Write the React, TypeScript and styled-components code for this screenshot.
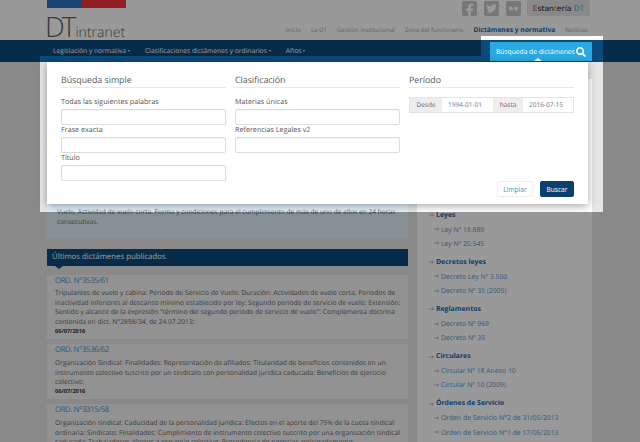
import React from 'react';
import styled, { createGlobalStyle } from 'styled-components';
import { FaFacebookSquare, FaTwitterSquare, FaFlickr, FaSearch } from 'react-icons/fa';

const Global = createGlobalStyle`
  html, body { margin: 0; padding: 0; }
  body {
    background: #e5e5e5;
    font-family: "Open Sans", sans-serif;
    color: #555;
    text-rendering: geometricPrecision;
  }
  * { box-sizing: border-box; }
`;

const Page = styled.div`
  position: relative;
  width: 640px;
  height: 442px;
  overflow: hidden;
`;

const Dim = styled.div`
  position: absolute;
  inset: 0;
  background: rgba(0, 0, 0, 0.4);
  clip-path: path(evenodd, 'M0 0H640V442H0Z M40 56H481V36H603V212H40Z');
`;

const Header = styled.header`
  height: 40px;
  background: #fff;
`;

const Wrap = styled.div`
  width: 545px;
  margin-left: 47px;
  display: flex;
  justify-content: space-between;
`;

const Brand = styled.div`
  width: 80px;
`;

const Flag = styled.div`
  display: flex;
  height: 8px;
  width: 79px;
  margin-bottom: 6px;
`;

const FlagPart = styled.div<{ $color: string; $width: number }>`
  background: ${p => p.$color};
  width: ${p => p.$width}px;
`;

const Logo = styled.div`
  display: flex;
  align-items: baseline;
  color: #5e5e5e;
  font-weight: 300;
  height: 26px;
  line-height: 26px;
`;

const LogoBig = styled.span`
  font-size: 28px;
  letter-spacing: -3px;
  margin-left: -2px;
`;

const LogoSmall = styled.span`
  font-size: 14px;
  margin-left: 2px;
`;

const HeaderRight = styled.div`
  display: flex;
  flex-direction: column;
  align-items: flex-end;
`;

const Socials = styled.div`
  display: flex;
  align-items: center;
  height: 16px;
  margin-right: 2px;
  color: #c6c6c6;
  font-size: 17px;
  gap: 5px;
`;

const Estanteria = styled.div`
  width: 63px;
  height: 16px;
  background: #e4e4e4;
  border-radius: 2px;
  font-family: "DejaVu Sans", sans-serif;
  font-size: 7.6px;
  line-height: 17px;
  text-align: center;
  color: #222;
  white-space: nowrap;
`;

const Tint = styled.span<{ $color: string }>`
  color: ${p => p.$color};
`;

const TopMenu = styled.nav`
  display: flex;
  gap: 10px;
  margin: 8px 4px 0 0;
  line-height: 12px;
`;

const TopLink = styled.span<{ $active?: boolean }>`
  color: ${p => (p.$active ? '#1a66ad' : '#a8a8a8')};
  font-weight: ${p => (p.$active ? 700 : 400)};
  font-size: ${p => (p.$active ? '6.7px' : '6.1px')};
  white-space: nowrap;
`;

const NavBar = styled.nav`
  height: 22px;
  background: #0b4a7a;
`;

const NavList = styled.div`
  display: flex;
  align-items: center;
  gap: 15px;
  padding-left: 6px;
  height: 20px;
  color: #fff;
  font-size: 6.7px;
`;

const Caret = styled.span`
  display: inline-block;
  margin-left: 2px;
  border-top: 2px solid currentColor;
  border-left: 1.5px solid transparent;
  border-right: 1.5px solid transparent;
  vertical-align: middle;
`;

const SearchButton = styled.div`
  position: relative;
  width: 102px;
  height: 19px;
  margin-top: 2px;
  background: #29abe2;
  color: #fff;
  font-size: 6.7px;
  display: flex;
  align-items: center;
  justify-content: space-between;
  padding: 0 6px;
  white-space: nowrap;
  svg { font-size: 10px; }
  &::after {
    content: '';
    position: absolute;
    left: 44px;
    bottom: 0;
    border-bottom: 3px solid #fff;
    border-left: 4px solid transparent;
    border-right: 4px solid transparent;
  }
`;

const Main = styled.main`
  width: 545px;
  margin-left: 47px;
  padding-top: 17px;
  display: flex;
  gap: 9px;
`;

const Left = styled.section`
  width: 361px;
`;

const InfoBox = styled.div`
  height: 159px;
  background: #e0f0f9;
  padding: 128px 10px 0;
  font-size: 6.6px;
  line-height: 9.5px;
  color: #666;
`;

const ListHead = styled.div`
  position: relative;
  height: 17px;
  margin: 11px 0 8.5px;
  background: #0b4a7a;
  color: #fff;
  font-size: 7.8px;
  line-height: 16px;
  padding-left: 5px;
  &::after {
    content: '';
    position: absolute;
    left: 8px;
    top: 17px;
    border-top: 3px solid #0b4a7a;
    border-left: 4px solid transparent;
    border-right: 4px solid transparent;
  }
`;

const Card = styled.article`
  background: #f4f4f4;
  margin-top: 5px;
  padding: 0 4px 4.5px 8px;
`;

const CardTitle = styled.div`
  color: #4f93d0;
  font-size: 7.8px;
  letter-spacing: -0.4px;
  line-height: 13px;
  margin-bottom: 0.7px;
`;

const CardText = styled.div`
  font-size: 6.7px;
  line-height: 9.6px;
  color: #666;
`;

const CardDate = styled.div`
  margin-top: 0.2px;
  font-size: 5.6px;
  line-height: 8px;
  font-weight: 700;
  color: #333;
`;

const Sidebar = styled.aside`
  width: 175px;
  height: 400px;
  background: #fff;
  padding: 129px 0 0 12px;
`;

const SideGroup = styled.div`
  margin-bottom: 4.6px;
`;

const SideRow = styled.div<{ $head?: boolean }>`
  display: flex;
  align-items: center;
  gap: 2px;
  height: 14.2px;
  margin-left: ${p => (p.$head ? 0 : 5)}px;
  color: ${p => (p.$head ? '#1a66ad' : '#5590cc')};
  font-weight: ${p => (p.$head ? 700 : 400)};
  font-size: ${p => (p.$head ? '6.9px' : '6.8px')};
  white-space: nowrap;
`;

const Arrow = () => (
  <svg width="5" height="4" viewBox="0 0 5 4" fill="none" stroke="#aaa" strokeWidth="0.8">
    <path d="M0 2H4.5M3 .7L4.5 2L3 3.3" />
  </svg>
);

const Modal = styled.div`
  position: absolute;
  left: 47px;
  top: 62px;
  width: 541px;
  height: 142px;
  background: #fff;
  box-shadow: 0 2px 8px rgba(0, 0, 0, 0.35);
  padding: 12px 14px 7px;
  display: grid;
  grid-template-columns: repeat(3, 165px);
  gap: 9px;
`;

const Col = styled.div`
  display: flex;
  flex-direction: column;
`;

const ColTitle = styled.h4`
  margin: 0 0 9px;
  height: 14px;
  font-size: 8.8px;
  font-weight: 400;
  line-height: 13px;
  color: #555;
  border-bottom: 1px solid #e8e8e8;
`;

const Label = styled.label`
  display: block;
  font-size: 7.2px;
  line-height: 10px;
  padding-bottom: 2px;
  color: #555;
`;

const TextBox = styled.div`
  height: 16px;
  flex: none;
  border: 1px solid #ddd;
  border-radius: 2px;
  background: #fff;
  box-shadow: inset 0 1px 1px rgba(0, 0, 0, 0.05);
`;

const DateGroup = styled.div`
  display: grid;
  grid-template-columns: 32px 51px 30px 51px;
  height: 16px;
  border: 1px solid #e4e4e4;
  font-size: 6.5px;
  line-height: 14px;
`;

const DateAddon = styled.span`
  background: #eee;
  color: #666;
  text-align: center;
`;

const DateValue = styled.span`
  color: #777;
  padding-left: 6px;
`;

const Actions = styled.div`
  margin-top: auto;
  display: flex;
  justify-content: flex-end;
  gap: 7px;
`;

const Btn = styled.button<{ $primary?: boolean }>`
  width: ${p => (p.$primary ? 34 : 36)}px;
  height: 16px;
  padding: 0;
  border-radius: 2px;
  border: 1px solid ${p => (p.$primary ? '#0b3f6d' : '#eee')};
  background: ${p => (p.$primary ? '#0b3f6d' : '#fff')};
  color: ${p => (p.$primary ? '#fff' : '#4a90c8')};
  font-family: inherit;
  font-size: 6.6px;
`;

const cards = [
  {
    title: 'ORD. N°3535/61',
    text: 'Tripulantes de vuelo y cabina: Periodo de Servicio de Vuelo: Duración: Actividades de vuelo corta: Periodos de inactividad inferiores al descanso mínimo establecido por ley: Segundo periodo de servicio de vuelo: Extensión: Sentido y alcance de la expresión "término del segundo periodo de servicio de vuelo": Complementa doctrina contenida en dict. N°2898/34, de 24.07.2013:',
    date: '06/07/2016',
  },
  {
    title: 'ORD. N°3536/62',
    text: 'Organización Sindical: Finalidades: Representación de afiliados: Titularidad de beneficios contenidos en un instrumento colectivo suscrito por un sindicato con personalidad jurídica caducada: Beneficios de ejercicio colectivo:',
    date: '06/07/2016',
  },
  {
    title: 'ORD. N°3315/58',
    text: 'Organización sindical: Caducidad de la personalidad jurídica: Efectos en el aporte del 75% de la cuota sindical ordinaria: Sindicato: Finalidades: Cumplimiento de instrumento colectivo suscrito por una organización sindical caducada: Trabajadores afectos a convenio colectivo: Procedencia de negociar anticipadamente:',
    date: '06/07/2016',
  },
];

const sideGroups = [
  { head: 'Leyes', items: ['Ley Nº 19.889', 'Ley Nº 20.545'] },
  { head: 'Decretos leyes', items: ['Decreto Ley Nº 3.500', 'Decreto Nº 35 (2005)'] },
  { head: 'Reglamentos', items: ['Decreto Nº 969', 'Decreto Nº 35'] },
  { head: 'Circulares', items: ['Circular Nº 18 Anexo 10', 'Circular Nº 10 (2009)'] },
  { head: 'Órdenes de Servicio', items: ['Orden de Servicio N°2 de 31/05/2013', 'Orden de Servicio N°1 de 17/05/2013'] },
];

export default function App(): React.ReactElement {
  return (
    <Page>
      <Global />
      <Header>
        <Wrap>
          <Brand>
            <Flag>
              <FlagPart $color="#2a70bf" $width={35} />
              <FlagPart $color="#f0323a" $width={44} />
            </Flag>
            <Logo>
              <LogoBig>DT</LogoBig>
              <LogoSmall>intranet</LogoSmall>
            </Logo>
          </Brand>
          <HeaderRight>
            <Socials>
              <FaFacebookSquare />
              <FaTwitterSquare />
              <FaFlickr />
              <Estanteria>
                <Tint $color="#c0392b">E</Tint>stan<Tint $color="#d68a1e">t</Tint>ería <Tint $color="#3aa0d8">D</Tint><Tint $color="#6cbf5a">T</Tint>
              </Estanteria>
            </Socials>
            <TopMenu>
              <TopLink>Inicio</TopLink>
              <TopLink>La DT</TopLink>
              <TopLink>Gestión institucional</TopLink>
              <TopLink>Zona del funcionario</TopLink>
              <TopLink $active>Dictámenes y normativa</TopLink>
              <TopLink>Noticias</TopLink>
            </TopMenu>
          </HeaderRight>
        </Wrap>
      </Header>
      <NavBar>
        <Wrap>
          <NavList>
            <span>Legislación y normativa<Caret /></span>
            <span>Clasificaciones dictámenes y ordinarios<Caret /></span>
            <span>Años<Caret /></span>
          </NavList>
          <SearchButton>
            Búsqueda de dictámenes
            <FaSearch />
          </SearchButton>
        </Wrap>
      </NavBar>
      <Main>
        <Left>
          <InfoBox>
            Vuelo. Actividad de vuelo corta. Forma y condiciones para el cumplimiento de más de uno de ellos en 24 horas consecutivas.
          </InfoBox>
          <ListHead>Últimos dictámenes publicados</ListHead>
          {cards.map(c => (
            <Card key={c.title}>
              <CardTitle>{c.title}</CardTitle>
              <CardText>{c.text}</CardText>
              <CardDate>{c.date}</CardDate>
            </Card>
          ))}
        </Left>
        <Sidebar>
          {sideGroups.map(g => (
            <SideGroup key={g.head}>
              <SideRow $head><Arrow />{g.head}</SideRow>
              {g.items.map(i => (
                <SideRow key={i}><Arrow />{i}</SideRow>
              ))}
            </SideGroup>
          ))}
        </Sidebar>
      </Main>
      <Dim />
      <Modal>
        <Col>
          <ColTitle>Búsqueda simple</ColTitle>
          <Label>Todas las siguientes palabras</Label>
          <TextBox />
          <Label>Frase exacta</Label>
          <TextBox />
          <Label>Título</Label>
          <TextBox />
        </Col>
        <Col>
          <ColTitle>Clasificación</ColTitle>
          <Label>Materias únicas</Label>
          <TextBox />
          <Label>Referencias Legales v2</Label>
          <TextBox />
        </Col>
        <Col>
          <ColTitle>Período</ColTitle>
          <DateGroup>
            <DateAddon>Desde</DateAddon>
            <DateValue>1994-01-01</DateValue>
            <DateAddon>hasta</DateAddon>
            <DateValue>2016-07-15</DateValue>
          </DateGroup>
          <Actions>
            <Btn>Limpiar</Btn>
            <Btn $primary>Buscar</Btn>
          </Actions>
        </Col>
      </Modal>
    </Page>
  );
}
